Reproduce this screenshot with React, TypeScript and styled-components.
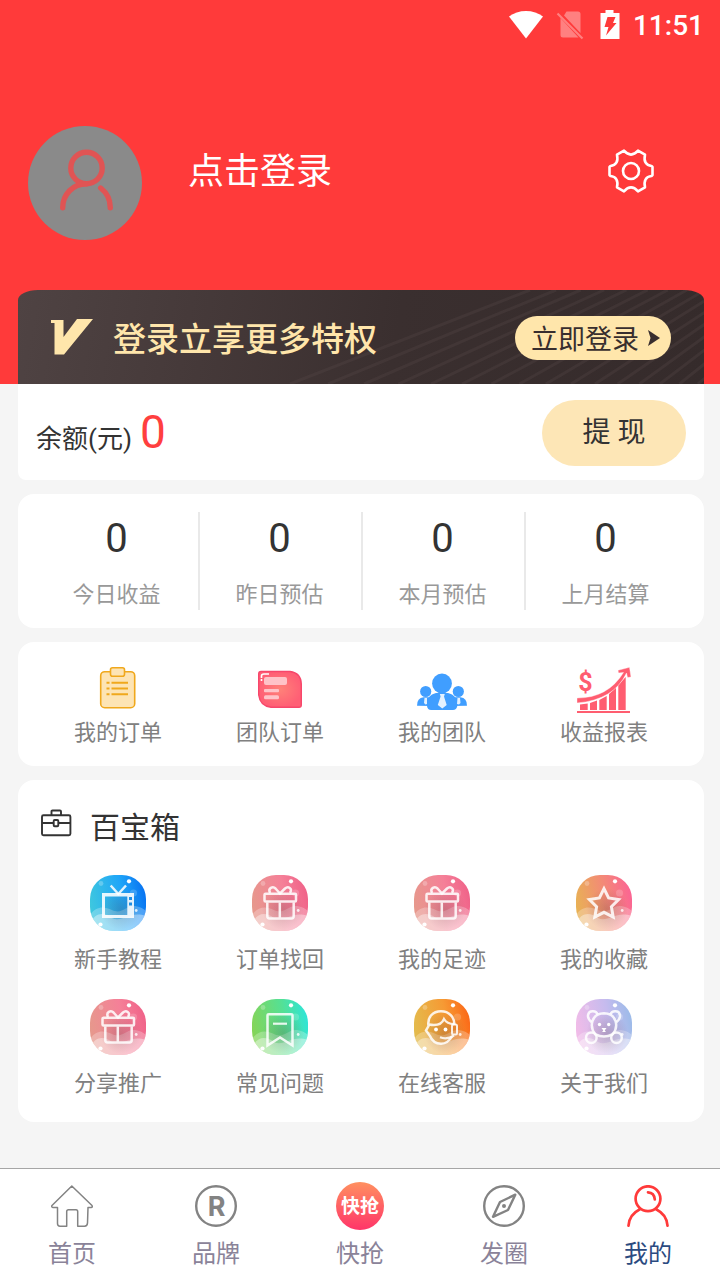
import React from "react";
import styled, { createGlobalStyle } from "styled-components";

const GlobalStyle = createGlobalStyle`
  *, *::before, *::after { box-sizing: border-box; }
  body {
    margin: 0;
    background: #f5f5f5;
    font-family: Roboto, "Noto Sans CJK SC", sans-serif;
    color: #333;
  }
  button {
    margin: 0;
    padding: 0;
    border: 0;
    background: none;
    color: inherit;
    font: inherit;
    cursor: pointer;
  }
  a { color: inherit; text-decoration: none; }
  svg { display: block; flex: none; }
  h1, h2, p, dl, dd, dt { margin: 0; font-weight: 400; }
`;

const Page = styled.div`
  display: flex;
  flex-direction: column;
  min-height: 100vh;
`;

const Header = styled.header`
  padding: 0 16px 0 18px;
  background: #ff3a3a;
`;

const StatusBar = styled.div`
  display: flex;
  align-items: center;
  justify-content: flex-end;
  height: 48px;
  padding-top: 4px;
  color: #fff;
`;

const StatusIcons = styled.div`
  display: flex;
  align-items: center;
  gap: 12px;
  margin: 0 9px 2px 0;
`;

const Clock = styled.time`
  font-size: 28px;
  line-height: 36px;
  font-weight: 500;
`;

const Profile = styled.section`
  display: flex;
  align-items: flex-start;
  padding: 78px 50px 50px 10px;
`;

const Avatar = styled.button`
  width: 114px;
  height: 114px;
  border-radius: 50%;
  background: #8a8a8a;
  overflow: hidden;
`;

const SignIn = styled.button`
  margin: 22px auto 0 46px;
  color: #fff;
  font-size: 36px;
  line-height: 48px;
`;

const Settings = styled.button`
  margin-top: 22px;
  color: #fff;
`;

const Banner = styled.section`
  position: relative;
  display: flex;
  align-items: center;
  height: 94px;
  padding: 0 33px;
  border-radius: 20px 20px 0 0 / 10px 10px 0 0;
  background: linear-gradient(100deg, #4f4343 0%, #463a3a 25%, #3a2f2f 55%, #352b2b 100%);
  color: #ffe6ab;
  overflow: hidden;
`;

const BannerLines = styled.svg`
  position: absolute;
  inset: 0 0 0 auto;
`;

const BannerTitle = styled.h2`
  position: relative;
  margin: 0 auto 0 20px;
  padding-top: 6px;
  font-size: 33px;
  line-height: 44px;
  font-weight: 500;
`;

const LoginPill = styled.button`
  position: relative;
  display: flex;
  align-items: center;
  justify-content: space-between;
  width: 156px;
  height: 44px;
  margin-top: 1px;
  padding: 0 11px 0 16px;
  border-radius: 22px;
  background: #ffe6ab;
  color: #382e2e;
  font-size: 27px;
  line-height: 40px;
`;

const PillText = styled.span`
  padding-top: 4px;
`;

const Main = styled.main`
  display: flex;
  flex: 1;
  flex-direction: column;
  gap: 14px;
  padding: 0 16px 46px 18px;
`;

const Balance = styled.section`
  display: flex;
  align-items: center;
  justify-content: space-between;
  height: 96px;
  padding: 2px 18px 0;
  border-radius: 0 0 8px 8px;
  background: #fff;
`;

const BalanceText = styled.p`
  display: flex;
  align-items: baseline;
  gap: 8px;
  padding-top: 4px;
  font-size: 26px;
  line-height: 56px;
`;

const Amount = styled.strong`
  color: #ff3f3f;
  font-size: 46px;
  font-weight: 400;
`;

const Withdraw = styled.button`
  width: 144px;
  height: 66px;
  border-radius: 33px;
  background: #fde6b6;
  font-size: 28px;
  line-height: 40px;
`;

const Card = styled.section`
  border-radius: 16px;
  background: #fff;
`;

const Stats = styled.dl`
  display: grid;
  grid-template-columns: repeat(4, 1fr);
  padding: 18px 17px;
`;

const Stat = styled.div`
  display: flex;
  flex-direction: column-reverse;
  justify-content: flex-end;
  gap: 16px;
  height: 98px;
  padding-top: 1px;
  text-align: center;

  & + & { box-shadow: inset 2px 0 0 #e9e9e9; }
`;

const StatValue = styled.dd`
  font-size: 40px;
  line-height: 52px;
`;

const StatLabel = styled.dt`
  color: #999;
  font-size: 22px;
  line-height: 28px;
`;

const LinkGrid = styled.nav<{ $gap: number; $pad: string }>`
  display: grid;
  grid-template-columns: repeat(4, 1fr);
  row-gap: 25px;
  padding: ${(p) => p.$pad};

  & > a { gap: ${(p) => p.$gap}px; }
`;

const GridLink = styled.a`
  display: flex;
  flex-direction: column;
  align-items: center;
  color: #808080;
  font-size: 22px;
  line-height: 28px;
`;

const BoxHeading = styled.h2`
  display: flex;
  align-items: center;
  gap: 18px;
  padding: 25px 22px;
  font-size: 30px;
  line-height: 45px;

  & > svg { margin-bottom: 10px; }
`;

const TabBar = styled.nav`
  position: sticky;
  bottom: 0;
  display: grid;
  grid-template-columns: repeat(5, 1fr);
  padding: 13px 0 11px;
  border-top: 1px solid #a6a6a6;
  background: #fff;
`;

const Tab = styled.a<{ $active?: boolean }>`
  display: flex;
  flex-direction: column;
  align-items: center;
  gap: 9px;
  color: ${(p) => (p.$active ? "#2b4a80" : "#8a8399")};
  font-size: 24px;
  line-height: 30px;
`;

const TabIcon = styled.span`
  display: grid;
  place-items: center;
  height: 48px;
`;

const RushBadge = styled.span`
  display: grid;
  place-items: center;
  width: 48px;
  height: 48px;
  padding-top: 2px;
  border-radius: 50%;
  background: linear-gradient(#ff9060, #ff3569);
  color: #fff;
  font-size: 19px;
  line-height: 24px;
  font-weight: 700;
`;

/* Status bar glyphs */
const WifiIcon = () => (
  <svg width="36" height="30" viewBox="0 0 36 30" fill="#fff" aria-hidden="true">
    <path d="M1 6.500C10-1 26-1 35 6.500L18 28.500Z" />
  </svg>
);

const NoSimIcon = () => (
  <svg width="28" height="30" viewBox="0 0 28 30" aria-hidden="true">
    <path d="M10.500 1.500H22Q24.500 1.500 24.500 4V23L8 5.500Z M4.500 8L22.500 27.500H7Q4.500 27.500 4.500 25Z" fill="#ff8080" />
    <path d="M1.500 3.500L26.500 28.500" stroke="#ff8080" strokeWidth="2.200" />
  </svg>
);

const BatteryIcon = () => (
  <svg width="28" height="30" viewBox="0 0 28 30" aria-hidden="true">
    <path d="M9.500 0H17.500V3H23.500V29H4.500V3H9.500Z" fill="#fff" />
    <path d="M11.500 7H19.500L17 13H20.500L10 25.500L12.500 17H8.500Z" fill="#ff3a3a" />
  </svg>
);

const AvatarIcon = () => (
  <svg width="114" height="114" viewBox="0 0 114 114" fill="none" stroke="#e05454" strokeWidth="5.400" strokeLinecap="round" aria-hidden="true">
    <circle cx="58.500" cy="42" r="15.700" />
    <path d="M34.700 81.700C34.700 68.500 45 57.700 58.500 57.700" />
    <path d="M72.700 62C79 67 82.300 74 82.300 81.700" />
  </svg>
);

const GearIcon = () => (
  <svg width="46" height="46" viewBox="-23 -23 46 46" fill="none" stroke="#fff" strokeWidth="2.600" strokeLinejoin="round" aria-hidden="true">
    <path d="M-7-20.300Q0-12.500 7-20.300L14-16.300C12.500-9.500 15-5.500 20.500-5L21.500-4V4L20.500 5C15 5.500 12.500 9.500 14 16.300L7 20.300Q0 12.500-7 20.300L-14 16.300C-12.500 9.500-15 5.500-20.500 5L-21.500 4V-4L-20.500-5C-15-5.500-12.500-9.500-14-16.300Z" />
    <circle r="8" />
  </svg>
);

const VipIcon = () => (
  <svg width="42" height="36" viewBox="0 0 42 36" fill="#ffe6ab" aria-hidden="true">
    <path d="M0 1H12.500V18L26 0H42L13 35.500H3.500V4H0Z" />
  </svg>
);

/* Diagonal strokes that grow denser and steeper towards the right edge */
const stripes = Array.from({ length: 34 }).reduce<{ from: number; to: number }[]>((list, _, i) => {
  const previous = i === 0 ? 232 : list[i - 1].from;
  const from = previous + Math.max(12, 40 * Math.pow(0.95, i));
  list.push({ from, to: from + Math.max(96, 240 * Math.pow(0.95, i)) });
  return list;
}, []);

const Stripes = () => (
  <BannerLines width="686" height="94" viewBox="0 0 686 94" stroke="#5a4c4c" strokeOpacity="0.280" strokeWidth="3" aria-hidden="true">
    {stripes.map((s) => (
      <line key={s.from} x1={s.from} y1="94" x2={s.to} y2="0" />
    ))}
  </BannerLines>
);

const ArrowIcon = () => (
  <svg width="12" height="16" viewBox="0 0 12 16" fill="#382e2e" aria-hidden="true">
    <path d="M0 0L12 8L0 16L2.500 8Z" />
  </svg>
);

/* Order and team glyphs, all on a 56 by 48 box */
const Glyph = ({ children }: { children: React.ReactNode }) => (
  <svg width="56" height="48" viewBox="0 0 56 48" fill="none" aria-hidden="true">
    {children}
  </svg>
);

const OrderIcon = () => (
  <Glyph>
    <rect x="10.700" y="5.700" width="34" height="36" rx="4" fill="#fde4b4" stroke="#f0a81c" strokeWidth="1.600" />
    <rect x="20.500" y="1.800" width="14" height="8.500" rx="2" fill="#fde4b4" stroke="#f0a81c" strokeWidth="1.600" />
    <path d="M21.500 16.700H38M21.500 22.500H38M21.500 28.200H38M16.500 16.700H19.500M16.500 22.500H19.500M16.500 28.200H19.500" stroke="#f0a81c" strokeWidth="2" />
  </Glyph>
);

const TeamOrderIcon = () => (
  <Glyph>
    <defs>
      <radialGradient id="teamOrder">
        <stop offset="0" stopColor="#ff8279" />
        <stop offset="1" stopColor="#ff5f75" />
      </radialGradient>
    </defs>
    <path d="M9 5.500H38Q49 7 49.300 18V39Q49.300 41.300 47 41.300H19Q8 40 6.700 29V8Q6.700 5.500 9 5.500Z" fill="url(#teamOrder)" stroke="#f7476b" strokeWidth="1.400" />
    <g fill="#ffc3c8">
      <rect x="12" y="11" width="23" height="8" rx="2" />
      <rect x="12" y="23" width="15" height="3.300" rx="1" />
      <rect x="12" y="29.300" width="15" height="4" rx="1.500" />
    </g>
    <path d="M9.500 12V10Q9.500 8 12 8H17M9.500 13V15" stroke="#fff" strokeWidth="1.600" />
  </Glyph>
);

const TeamIcon = () => (
  <Glyph>
    <g fill="#409eff">
      <circle cx="11.700" cy="25.500" r="5.600" />
      <circle cx="44.300" cy="25.500" r="5.600" />
      <path d="M3 39.700Q3 32 9.500 31.300H15L18 40Z" />
      <path d="M53 39.700Q53 32 46.500 31.300H41L38 40Z" />
    </g>
    <path d="M13 40C12.500 32 16 28.500 22 27H34C40 28.500 43.500 32 43.300 40Q42.500 44 39 44H17Q13.500 44 13 40Z" fill="#409eff" />
    <circle cx="28" cy="17.500" r="9.900" fill="#409eff" />
    <path d="M25.800 28H30.800L30 30.500L32.700 39L28.300 42.500L23.800 39L26.600 30.500Z M10.500 32H13V38L11.500 38.500L10 37Z M43.500 32H46L46.500 37L45 38.500L43 38Z" fill="#e3f1ff" />
  </Glyph>
);

const ReportIcon = () => (
  <Glyph>
    <g fill="#ff5d70">
      <path d="M4 38.500L11.700 37.500V44H4Z M14 37L21 34.500V44H14Z M23.300 34L30.700 30V44H23.300Z M33 28L40 21.500V44H33Z M42.300 19L49.700 11V44H42.300Z" />
      <rect x="1" y="45" width="53" height="2" />
      <path d="M42 4.300L53.500 1.300L55 11L51.500 11.500L50.500 7Q38 34 1 37V32Q32 32 47.500 6.500L42.500 7Z" stroke="#fff" strokeWidth="0.400" />
      <text x="9.500" y="25" fontFamily="Roboto, sans-serif" fontSize="25" fontWeight="700" textAnchor="middle">$</text>
    </g>
  </Glyph>
);

const CaseIcon = () => (
  <svg width="32" height="28" viewBox="0 0 32 28" fill="none" stroke="#333" strokeWidth="1.900" aria-hidden="true">
    <rect x="2" y="6.300" width="28.400" height="20" rx="1.500" />
    <path d="M11.500 6V2.500Q11.500 1.500 12.500 1.500H20Q21 1.500 21 2.500V6M2 14H13M19 14H30.400" />
    <rect x="13.700" y="11" width="4.600" height="6.300" rx="1" />
  </svg>
);

/* Round tool tiles: gradient ground, bubbles and two waves under a white glyph */
type TileProps = { id: string; colors: [string, string, string]; children: React.ReactNode };

const Tile = ({ id, colors, children }: TileProps) => (
  <svg width="56" height="56" viewBox="0 0 56 56" fill="none" aria-hidden="true">
    <defs>
      <linearGradient id={`${id}-ground`} x1="0" y1="0.600" x2="1" y2="0.400">
        <stop offset="0" stopColor={colors[0]} />
        <stop offset="0.600" stopColor={colors[1]} />
        <stop offset="1" stopColor={colors[2]} />
      </linearGradient>
      <radialGradient id={`${id}-shade`}>
        <stop offset="0" stopColor="#503030" stopOpacity="0.220" />
        <stop offset="1" stopColor="#503030" stopOpacity="0" />
      </radialGradient>
      <clipPath id={`${id}-clip`}>
        <rect width="56" height="56" rx="24" />
      </clipPath>
    </defs>
    <g clipPath={`url(#${id}-clip)`}>
      <rect width="56" height="56" fill={`url(#${id}-ground)`} />
      <circle cx="11" cy="8.500" r="2.400" fill="#fff" fillOpacity="0.250" />
      <circle cx="43.500" cy="18" r="3.600" fill="#fff" fillOpacity="0.180" />
      <path d="M0 40C6 31 14 31 22 35C32 40 36 30 45 31Q52 32 56 36V56H0Z" fill="#fff" fillOpacity="0.260" />
      <path d="M0 49C5 37 14 37 22 43C32 48 40 35 56 41V56H0Z" fill="#fff" fillOpacity="0.380" />
      <circle cx="31" cy="34" r="21" fill={`url(#${id}-shade)`} />
      <circle cx="39" cy="6.300" r="2.100" fill="#fff" />
      <circle cx="46.200" cy="35.500" r="1.400" fill="#fff" fillOpacity="0.800" />
      <circle cx="10.500" cy="49.500" r="2.100" fill="#fff" />
    </g>
    <g stroke="#fff" strokeOpacity="0.860" strokeWidth="2.500">{children}</g>
  </svg>
);

const pink: [string, string, string] = ["#e6998c", "#f58098", "#f06389"];

const TvTile = () => (
  <Tile id="tv" colors={["#3fc8de", "#1fa6f8", "#0874f2"]}>
    <path d="M20.700 10.500L28.300 19L36 10.500" />
    <path d="M12 18H44V43H12ZM15 21.500V40H37.300V21.500ZM39 22V25H42V22ZM39 27.500V30.500H42V27.500Z" fill="#fff" fillOpacity="0.880" fillRule="evenodd" stroke="none" />
  </Tile>
);

const GiftTile = ({ id }: { id: string }) => (
  <Tile id={id} colors={pink}>
    <rect x="12.500" y="18.700" width="31.500" height="7.800" rx="1" />
    <path d="M15.300 27.500V41Q15.300 43.500 17.500 43.500H39.500Q41.700 43.500 41.700 41V27.500M27.800 27.500V43" />
    <path d="M18 18C15.500 13 21 11 23.500 13.500L28 18.500L33 13.500C36 11 41 13 38 18" />
  </Tile>
);

const StarTile = () => (
  <Tile id="star" colors={["#e8b254", "#f4867a", "#fb6593"]}>
    <path d="M28 13.700L32.600 23L42.600 24.500L35.400 31.700L37.200 42L28 37.300L18.800 42L20.600 31.700L13.400 24.500L23.400 23Z" strokeWidth="3" />
  </Tile>
);

const BookmarkTile = () => (
  <Tile id="bookmark" colors={["#86d456", "#55e094", "#2fe5d6"]}>
    <path d="M15.500 46.500V16.500Q15.500 15.300 17 15.300H39Q40.500 15.300 40.500 16.500V46.500L28 38.500Z" />
    <path d="M21 24.700H35" strokeWidth="2.200" />
  </Tile>
);

const ServiceTile = () => (
  <Tile id="service" colors={["#e3bc4e", "#f69a34", "#fb6a18"]}>
    <path d="M38 37.500Q34 44.500 27 44.800Q19 44.500 16 37L12 31.500L14.500 27C13 18 19 12.300 27 12.300C35 12.300 40.500 18 40.500 26" />
    <path d="M15 25.500C23 27 28 25 30 20Q33 25 40 25" strokeWidth="2.300" />
    <rect x="38" y="25.500" width="5" height="10" rx="1.500" strokeWidth="2" />
    <path d="M26 38.300Q33 41 40 36.500" strokeWidth="2.300" />
    <circle cx="22" cy="30.500" r="1.900" fill="#fff" stroke="none" />
    <circle cx="31.500" cy="30.500" r="1.900" fill="#fff" stroke="none" />
  </Tile>
);

const BearTile = () => (
  <Tile id="bear" colors={["#f2bce8", "#c6bbee", "#9dbbe9"]}>
    <path d="M15.500 23C9.500 18 12 12 17 12.300Q20.500 12.500 21.500 15.300M40.500 23C46.500 18 44 12 39 12.300Q35.500 12.500 34.500 15.300" />
    <path d="M19.500 35.500C13 28 15 14.500 28 14.200C41 14.500 43 28 36.500 35.500Q28 39.500 19.500 35.500Z" />
    <circle cx="15.300" cy="38.700" r="5.300" />
    <circle cx="40.500" cy="38.700" r="5.300" />
    <g fill="#fff" stroke="none">
      <circle cx="23.500" cy="25.500" r="1.700" />
      <circle cx="32.700" cy="25.500" r="1.700" />
      <path d="M25.500 29H30.500L28.700 31.500L30 33H26L27.300 31.500Z" />
    </g>
  </Tile>
);

/* Tab bar glyphs */
const TabGlyph = ({ children, color = "#838383", width = 2.4 }: { children: React.ReactNode; color?: string; width?: number }) => (
  <svg width="42" height="42" viewBox="0 0 42 42" fill="none" stroke={color} strokeWidth={width} strokeLinejoin="round" strokeLinecap="round" aria-hidden="true">
    {children}
  </svg>
);

const HomeIcon = () => (
  <TabGlyph width={1.5}>
    <path d="M20.800 1L41 20.500Q42 22.300 40 22.500H37L36.500 38Q36.300 41.200 33.500 41.200H26.700V26.500Q26.700 24.700 25 24.700H17.500Q15.700 24.700 15.700 26.500V41.200H9Q6.500 41.200 6.500 38.500V22.500H2Q0 22 1 20.500Z" />
  </TabGlyph>
);

const BrandIcon = () => (
  <TabGlyph>
    <circle cx="21" cy="21" r="19.800" />
    <text x="21.500" y="30.500" fill="#838383" stroke="none" fontFamily="Inter, Roboto, sans-serif" fontSize="27" fontWeight="700" textAnchor="middle">R</text>
  </TabGlyph>
);

const CompassIcon = () => (
  <TabGlyph>
    <circle cx="21" cy="21" r="19.800" />
    <path d="M32.300 9.700L25 25L10 31.800L17 17Z" />
    <circle cx="21" cy="21" r="2" fill="#838383" stroke="none" />
  </TabGlyph>
);

const MineIcon = () => (
  <TabGlyph color="#ff3a3a" width={2.7}>
    <circle cx="21" cy="13.700" r="12.400" />
    <path d="M1.500 40.700C2 33 6.500 27.500 12.500 24.500M40.500 40.700C40 33 35.500 27.500 29.500 24.500M21 7.300C25.500 7.500 27.500 10.500 27.800 14.500" />
  </TabGlyph>
);

const stats = ["今日收益", "昨日预估", "本月预估", "上月结算"];

const orders = [
  { label: "我的订单", icon: <OrderIcon /> },
  { label: "团队订单", icon: <TeamOrderIcon /> },
  { label: "我的团队", icon: <TeamIcon /> },
  { label: "收益报表", icon: <ReportIcon /> },
];

const tools = [
  { label: "新手教程", icon: <TvTile /> },
  { label: "订单找回", icon: <GiftTile id="recover" /> },
  { label: "我的足迹", icon: <GiftTile id="history" /> },
  { label: "我的收藏", icon: <StarTile /> },
  { label: "分享推广", icon: <GiftTile id="share" /> },
  { label: "常见问题", icon: <BookmarkTile /> },
  { label: "在线客服", icon: <ServiceTile /> },
  { label: "关于我们", icon: <BearTile /> },
];

const tabs = [
  { label: "首页", icon: <HomeIcon /> },
  { label: "品牌", icon: <BrandIcon /> },
  { label: "快抢", icon: <RushBadge>快抢</RushBadge> },
  { label: "发圈", icon: <CompassIcon /> },
  { label: "我的", icon: <MineIcon />, active: true },
];

export default function App() {
  return (
    <Page>
      <GlobalStyle />
      <Header>
        <StatusBar>
          <StatusIcons>
            <WifiIcon />
            <NoSimIcon />
            <BatteryIcon />
          </StatusIcons>
          <Clock>11:51</Clock>
        </StatusBar>
        <Profile>
          <Avatar aria-label="头像">
            <AvatarIcon />
          </Avatar>
          <SignIn>点击登录</SignIn>
          <Settings aria-label="设置">
            <GearIcon />
          </Settings>
        </Profile>
        <Banner>
          <Stripes />
          <VipIcon />
          <BannerTitle>登录立享更多特权</BannerTitle>
          <LoginPill>
            <PillText>立即登录</PillText>
            <ArrowIcon />
          </LoginPill>
        </Banner>
      </Header>
      <Main>
        <Balance>
          <BalanceText>
            余额(元)
            <Amount>0</Amount>
          </BalanceText>
          <Withdraw>提 现</Withdraw>
        </Balance>
        <Card>
          <Stats>
            {stats.map((label) => (
              <Stat key={label}>
                <StatLabel>{label}</StatLabel>
                <StatValue>0</StatValue>
              </Stat>
            ))}
          </Stats>
        </Card>
        <Card>
          <LinkGrid $gap={5} $pad="24px 19px 19px">
            {orders.map(({ label, icon }) => (
              <GridLink key={label} href="#">
                {icon}
                {label}
              </GridLink>
            ))}
          </LinkGrid>
        </Card>
        <Card>
          <BoxHeading>
            <CaseIcon />
            百宝箱
          </BoxHeading>
          <LinkGrid $gap={15} $pad="0 19px 24px">
            {tools.map(({ label, icon }) => (
              <GridLink key={label} href="#">
                {icon}
                {label}
              </GridLink>
            ))}
          </LinkGrid>
        </Card>
      </Main>
      <TabBar>
        {tabs.map(({ label, icon, active }) => (
          <Tab key={label} href="#" $active={active} aria-current={active ? "page" : undefined}>
            <TabIcon>{icon}</TabIcon>
            {label}
          </Tab>
        ))}
      </TabBar>
    </Page>
  );
}
